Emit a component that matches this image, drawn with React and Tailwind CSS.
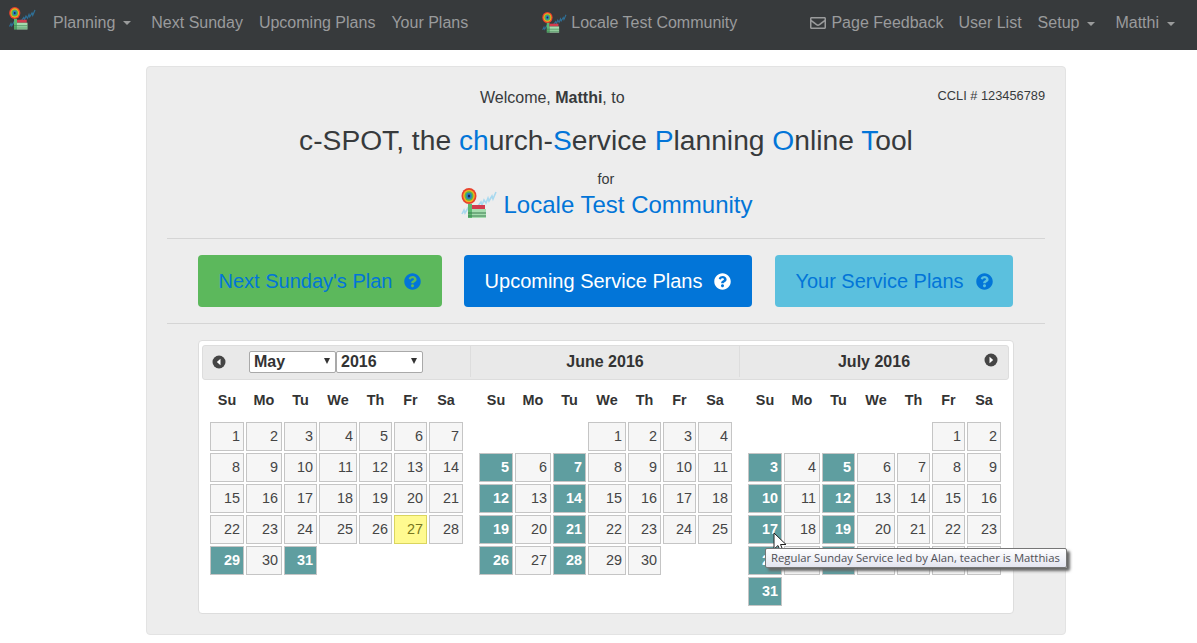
import React from "react";
import { FaQuestionCircle, FaRegEnvelope } from "react-icons/fa";

const weekdays = ["Su", "Mo", "Tu", "We", "Th", "Fr", "Sa"];

const months = [
  { name: "May 2016", offset: 0, days: 31, events: [29, 31], today: 27 },
  { name: "June 2016", offset: 3, days: 30, events: [5, 7, 12, 14, 19, 21, 26, 28] },
  { name: "July 2016", offset: 5, days: 31, events: [3, 5, 10, 12, 17, 19, 24, 26, 31] },
];

const Logo = ({ className, scribble = "#a9d9ef" }) => (
  <svg viewBox="0 0 40 32" className={className}>
    <path
      d="M2 26l2-4 1 3 3-5 1 2M18 18l3-4 1 3 2-5 2 3 2-5 1 3 3-5 1 3 3-7"
      fill="none"
      stroke={scribble}
      strokeWidth="1.6"
    />
    <ellipse cx="9" cy="8" rx="7.5" ry="8" fill="#e8412c" />
    <ellipse cx="9" cy="8" rx="5.8" ry="6.3" fill="#f2b01e" />
    <ellipse cx="9" cy="8" rx="4.4" ry="4.8" fill="#58b947" />
    <ellipse cx="9" cy="8" rx="2.8" ry="3.2" fill="#2a7fc0" />
    <ellipse cx="9" cy="8" rx="1.2" ry="1.5" fill="#1b2a4e" />
    <rect x="8" y="16" width="4" height="14" fill="#5db872" />
    <path d="M12 17h13v4H12z" fill="#d23b4e" />
    <rect x="12" y="21" width="14" height="9" fill="#a5dcae" />
    <path d="M8 25h18M8 28h18" stroke="#3d7d50" strokeWidth="1" />
  </svg>
);

const NavCaret = () => (
  <span className="inline-block ml-[8px] align-middle border-x-[4px] border-t-[4px] border-x-transparent border-t-[#9a9b9c]" />
);

const PagerIcon = ({ flip }) => (
  <svg viewBox="0 0 14 14" className="w-[14px] h-[14px]">
    <circle cx="7" cy="7" r="6.5" fill="#454545" />
    <path d={flip ? "M5.5 3.8L9.2 7l-3.7 3.2z" : "M8.5 3.8L4.8 7l3.7 3.2z"} fill="#fff" />
  </svg>
);

const SelectBox = ({ value, options, width }) => (
  <div className={`relative ${width}`}>
    <select
      defaultValue={value}
      className="w-full h-[22px] appearance-none bg-white border border-[#a9a9a9] rounded-[2px] pl-[4px] text-[16px] leading-[20px] font-bold text-[#333]"
    >
      {options.map((option) => (
        <option key={option}>{option}</option>
      ))}
    </select>
    <span className="absolute right-[6px] top-[8px] border-x-[3.5px] border-t-[6px] border-x-transparent border-t-[#333]" />
  </div>
);

const DayCell = ({ day, month }) => {
  let tone = "bg-[#f6f6f6] border-[#c5c5c5] text-[#454545]";
  if (month.events.includes(day)) tone = "bg-[#5f9ea0] border-[#c5c5c5] text-white font-bold";
  else if (month.today === day) tone = "bg-[#fffa90] border-[#dad55e] text-[#777620]";
  return (
    <div className={`h-[29px] border pr-[3px] text-right text-[14.4px] leading-[27px] ${tone}`}>{day}</div>
  );
};

const Month = ({ month }) => (
  <div className="w-[269px] pl-[8px] shrink-0">
    <div className="grid grid-cols-[34px_36px_33px_38px_33px_33px_34px] gap-x-[2px] h-[42px] items-center text-center text-[14.4px] font-bold text-[#333]">
      {weekdays.map((day) => (
        <span key={day}>{day}</span>
      ))}
    </div>
    <div className="grid grid-cols-[34px_36px_33px_38px_33px_33px_34px] gap-[2px]">
      {Array.from({ length: month.offset }).map((_, i) => (
        <div key={i} />
      ))}
      {Array.from({ length: month.days }).map((_, i) => (
        <DayCell key={i} day={i + 1} month={month} />
      ))}
    </div>
  </div>
);

export default function App() {
  return (
    <div className="font-['Liberation_Sans',Arial,sans-serif] text-[#373a3c] bg-white h-[643px] overflow-hidden">
      {/* navbar */}
      <nav className="h-[50px] bg-[#373a3c] flex items-start justify-between pl-[8px] pr-[22px] text-[16px] text-[#9a9b9c]">
        <div className="flex items-center gap-[16px] pt-[11px] leading-[24px]">
          <div className="flex items-center">
            <Logo className="w-[30px] h-[24px] -mt-[9px] mr-[15px]" scribble="#2f6f96" />
            <span>Planning</span>
            <NavCaret />
          </div>
          <span className="ml-[4px]">Next Sunday</span>
          <span>Upcoming Plans</span>
          <span>Your Plans</span>
        </div>
        <div className="flex items-center pt-[11px] leading-[24px]">
          <Logo className="w-[28px] h-[22px] mr-[2px]" scribble="#2f6f96" />
          <span>Locale Test Community</span>
        </div>
        <div className="flex items-center gap-[16px] pt-[11px] leading-[24px]">
          <span className="flex items-center gap-[5px] mr-[-1px]">
            <FaRegEnvelope className="w-[16px] h-[16px]" />
            Page Feedback
          </span>
          <span>User List</span>
          <span>
            Setup
            <NavCaret />
          </span>
          <span className="ml-[4px]">
            Matthi
            <NavCaret />
          </span>
        </div>
      </nav>

      {/* main well */}
      <div className="w-[920px] h-[569px] mt-[16px] ml-[146px] bg-[#ededed] border border-[#e3e3e3] rounded-[4px] px-[20px]">
        <div className="flex pt-[19px] h-[42px] items-start">
          <p className="flex-1 text-center text-[16px] leading-[24px]">
            Welcome, <b>Matthi</b>, to
          </p>
          <span className="text-[12.8px] leading-[20px]">CCLI # 123456789</span>
        </div>
        <h1 className="mt-[15px] text-center text-[28.2px] leading-[33px]">
          c-SPOT, the <span className="text-[#0275d8]">ch</span>urch-<span className="text-[#0275d8]">S</span>ervice{" "}
          <span className="text-[#0275d8]">P</span>lanning <span className="text-[#0275d8]">O</span>nline{" "}
          <span className="text-[#0275d8]">T</span>ool
        </h1>
        <p className="mt-[10px] text-center text-[14.4px] leading-[24px]">for</p>
        <div className="-mt-[3px] flex items-center justify-center text-[24px] leading-[29px] text-[#0275d8] pb-[18px] border-b border-[#d5d5d5]">
          <Logo className="w-[40px] h-[32px] mr-[4px]" />
          Locale Test Community
        </div>

        {/* big buttons */}
        <div className="flex items-center h-[85px] border-b border-[#d5d5d5] pl-[31px]">
          <div className="w-[244px] h-[52px] bg-[#5cb85c] rounded-[4px] flex items-center justify-center gap-[12px] text-[20px] text-[#0275d8]">
            Next Sunday's Plan
            <FaQuestionCircle className="w-[17px] h-[17px]" />
          </div>
          <div className="w-[288px] h-[52px] ml-[22px] bg-[#0275d8] rounded-[4px] flex items-center justify-center gap-[12px] text-[20px] text-white">
            Upcoming Service Plans
            <FaQuestionCircle className="w-[17px] h-[17px]" />
          </div>
          <div className="w-[238px] h-[52px] ml-[23px] bg-[#5bc0de] rounded-[4px] flex items-center justify-center gap-[12px] text-[20px] text-[#0275d8]">
            Your Service Plans
            <FaQuestionCircle className="w-[17px] h-[17px]" />
          </div>
        </div>

        {/* calendar */}
        <div className="relative w-[816px] h-[274px] mt-[16px] ml-[31px] bg-white border border-[#dddddd] rounded-[4px] pl-[3px] pr-[4px] pt-[4px]">
          <div className="flex h-[35px] pb-[2px] bg-[#e9e9e9] border border-[#dddddd] rounded-[3px] font-bold text-[16px] text-[#333]">
            <div className="w-[268px] flex items-center border-r border-[#dddddd] pl-[9px]">
              <PagerIcon />
              <div className="flex ml-[23px]">
                <SelectBox value="May" options={["May"]} width="w-[87px]" />
                <SelectBox value="2016" options={["2016"]} width="w-[87px]" />
              </div>
            </div>
            <div className="w-[269px] flex items-center justify-center border-r border-[#dddddd]">June 2016</div>
            <div className="flex-1 flex items-center justify-center relative">
              July 2016
              <span className="absolute right-[10px] top-[7px]">
                <PagerIcon flip />
              </span>
            </div>
          </div>
          <div className="flex">
            {months.map((month) => (
              <Month key={month.name} month={month} />
            ))}
          </div>

          {/* cursor */}
          <svg viewBox="0 0 14 22" className="absolute left-[574px] top-[191px] w-[14px] h-[22px] z-10">
            <path d="M1 1v16l4-3.5 2.5 6 2.5-1-2.5-6H13z" fill="#fff" stroke="#222" strokeWidth="1" />
          </svg>

          {/* tooltip */}
          <div className="absolute left-[566px] top-[207px] h-[20px] w-[302px] z-20 px-[5px] whitespace-nowrap rounded-[2px] border border-[#767676] bg-gradient-to-b from-white to-[#e4e5f0] shadow-[3px_3px_3px_#666] font-['Open_Sans',sans-serif] text-[11.3px] leading-[18px] text-[#4f4f55]">
            Regular Sunday Service led by Alan, teacher is Matthias
          </div>
        </div>
      </div>
    </div>
  );
}
